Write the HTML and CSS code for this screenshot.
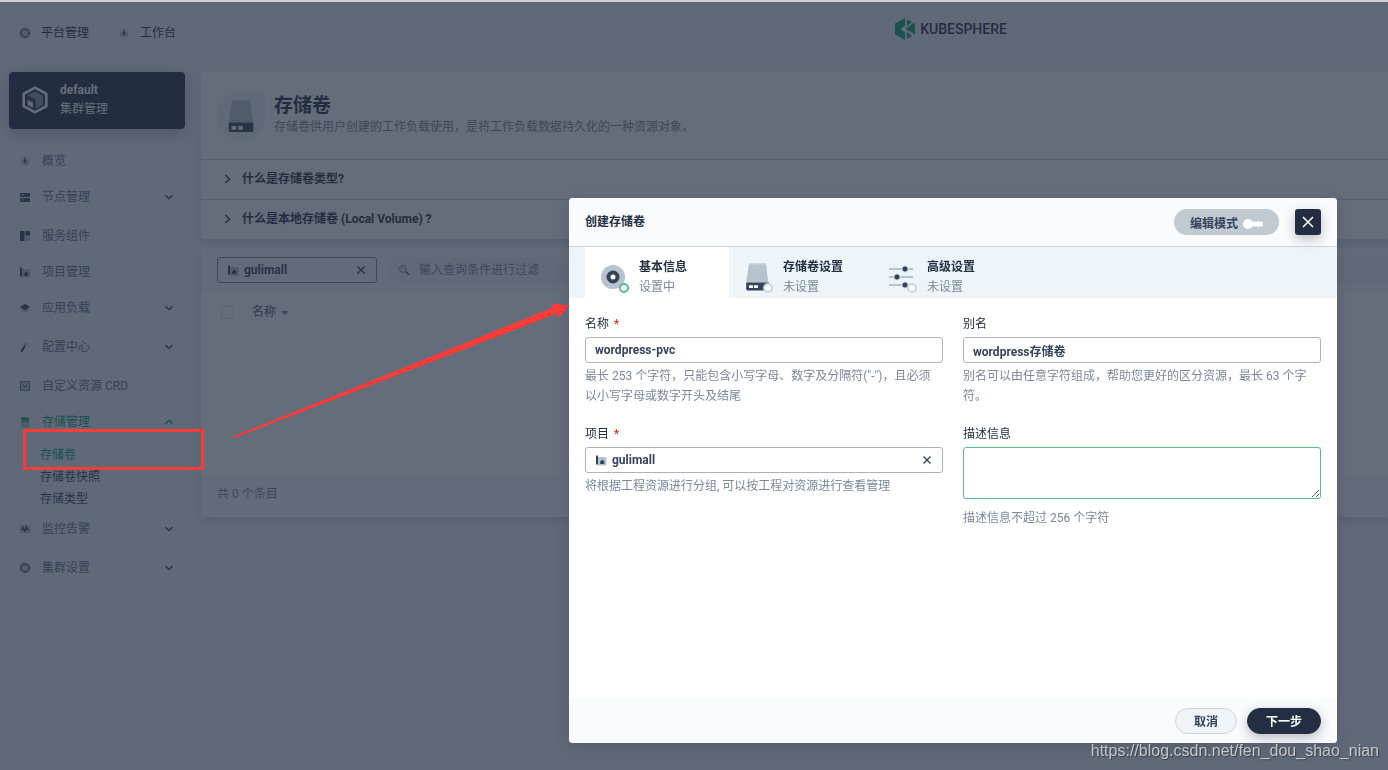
FILE: index.html
```html
<!DOCTYPE html>
<html lang="zh-CN">
<head>
<meta charset="utf-8">
<title>KubeSphere - 存储卷</title>
<link rel="stylesheet" href="styles.css">
</head>
<body>
<svg class="defs" aria-hidden="true">
  <symbol id="i-gear" viewBox="0 0 12 12"><circle cx="6" cy="6" r="4.7" fill="none" stroke="#324558" stroke-width="1.2" stroke-dasharray="1.4 1.06"/><circle cx="6" cy="6" r="3.5" fill="#dce3ea" stroke="#324558"/><circle cx="6" cy="6" r="1.6" fill="#b6c2cd"/></symbol>
  <symbol id="i-gauge" viewBox="0 0 12 12"><circle cx="6" cy="6" r="4.6" fill="#b6c2cd"/><path d="M2 5a4 4 0 0 1 8 0z" fill="#dce3ea"/><path d="M6 2.5v4" stroke="#324558" stroke-width="1.2"/><circle cx="6" cy="6.6" r="1.3" fill="#324558"/></symbol>
  <symbol id="i-node" viewBox="0 0 12 12"><rect x="1" y="2" width="10" height="4" rx=".8" fill="#324558"/><rect x="1" y="7" width="10" height="4" rx=".8" fill="#324558"/><path d="M2 4h3M2 9h3" stroke="#b6c2cd" stroke-width="1.2"/></symbol>
  <symbol id="i-comp" viewBox="0 0 12 12"><rect x="1" y="1" width="4.5" height="10" fill="#324558"/><rect x="6.3" y="1" width="4.7" height="4.5" fill="#324558"/><rect x="6.3" y="6.5" width="4.7" height="4.5" fill="#b6c2cd"/></symbol>
  <symbol id="i-project" viewBox="0 0 12 12"><rect x="3" y="3" width="8.5" height="8.5" fill="#b6c2cd"/><rect x="1" y="1.500" width="2" height="9" fill="#324558"/><path d="M5.200 10V7.500L7.200 5.500l2 2V10z" fill="#324558"/></symbol>
  <symbol id="i-app" viewBox="0 0 12 12"><path d="M1.5 8 6 5.6 10.5 8 6 11z" fill="#b6c2cd"/><path d="M.8 5 6 2l5.2 3L6 8.2z" fill="#324558"/></symbol>
  <symbol id="i-hammer" viewBox="0 0 12 12"><path d="M3 2.8Q7 0 11.2 4.2L9.5 4 7 4.5Z" fill="#b6c2cd"/><path d="M6.2 4.2 2.2 11" stroke="#324558" stroke-width="1.8"/></symbol>
  <symbol id="i-crd" viewBox="0 0 12 12"><rect x="1.5" y="1.5" width="9" height="9" fill="#b6c2cd" stroke="#6b7b8c"/><path d="m4 5.3 2 1.8 2-1.8" fill="none" stroke="#324558"/></symbol>
  <symbol id="i-store" viewBox="0 0 12 12"><rect x="2" y="6" width="8" height="5.5" rx="2" fill="#8ccdb0"/><rect x="2" y="3" width="8" height="4" fill="#55bc8a"/><ellipse cx="6" cy="2.5" rx="4" ry="1.6" fill="#00a971"/><path d="M2 7h8M2 9h8" stroke="#d5eee3" stroke-width=".5"/></symbol>
  <symbol id="i-monitor" viewBox="0 0 12 12"><rect x=".8" y="2.2" width="10.8" height="8" fill="#b6c2cd"/><path d="M1.5 6.5h2l1-2 1.4 4 1.5-4.5 1 2.5h2" fill="none" stroke="#324558" stroke-width="1.2"/></symbol>
  <symbol id="i-down" viewBox="0 0 12 12"><path d="m2.5 4.2 3.5 3.4 3.5-3.4" fill="none" stroke="currentColor" stroke-width="1.4"/></symbol>
  <symbol id="i-up" viewBox="0 0 12 12"><path d="m2.5 7.8 3.5-3.4 3.5 3.4" fill="none" stroke="currentColor" stroke-width="1.4"/></symbol>
  <symbol id="i-right" viewBox="0 0 12 12"><path d="m4.500 2 4 4-4 4" fill="none" stroke="currentColor" stroke-width="1.4"/></symbol>
  <symbol id="i-close" viewBox="0 0 12 12"><path d="m2.5 2.5 7 7m0-7-7 7" fill="none" stroke="currentColor" stroke-width="1.4"/></symbol>
  <symbol id="i-disk" viewBox="0 0 28 36"><path d="M4.500 1.500h19l3.500 23.500H1z" fill="#b6c2cd"/><path d="M4.500 1.500h19l.2 1.500H4.300z" fill="#c8d1d9"/><path d="M1 25h26v8a2 2 0 0 1-2 2H3a2 2 0 0 1-2-2z" fill="#324558"/><path d="M4 28.500h5v4H4zm7 0h5v4h-5z" fill="#fff"/></symbol>
</svg>

<div class="page">
  <header class="topbar">
    <nav class="topnav">
      <a href="#"><svg class="icon"><use href="#i-gear"/></svg>平台管理</a>
      <a href="#"><svg class="icon"><use href="#i-gauge"/></svg>工作台</a>
    </nav>
    <a class="brand" href="#">
      <svg class="brand-mark" viewBox="0 0 20 22"><path d="M10 0v7.500L5.500 11l4.500 3.500V22L0 16.500v-11z" fill="#00a971"/><path d="M12 1.200 17 4l-5 4zM18.500 5 20 5.800v10.400L10.500 11zM12 14l5 4-5 2.900z" fill="#00a971"/></svg>
      <span>KUBESPHERE</span>
    </a>
  </header>

  <div class="layout">
    <aside class="sidebar">
      <a class="cluster" href="#">
        <svg class="cluster-icon" viewBox="0 0 24 26"><path d="M12 1.500 22.500 7.300v11.400L12 24.500 1.500 18.700V7.300z" fill="none" stroke="#fff" stroke-width="2.400"/><path d="M12 4.800 19.500 9v8.500L12 21.500 4.500 17.500V9z" fill="#8a97a8"/><path d="M4.500 9v8.500l7.500 4V13z" fill="#39465a"/><path d="M4.500 9 12 13v8.500" fill="none" stroke="#242e42"/><path d="M5.200 13 10 15.500v4.500L5.200 17.500z" fill="#fff"/></svg>
        <span><strong>default</strong><span>集群管理</span></span>
      </a>
      <ul class="menu">
        <li><a href="#"><svg class="icon"><use href="#i-gauge"/></svg>概览</a></li>
        <li class="parent"><a href="#"><svg class="icon"><use href="#i-node"/></svg>节点管理<svg class="icon caret"><use href="#i-down"/></svg></a></li>
        <li><a href="#"><svg class="icon"><use href="#i-comp"/></svg>服务组件</a></li>
        <li><a href="#"><svg class="icon"><use href="#i-project"/></svg>项目管理</a></li>
        <li class="parent"><a href="#"><svg class="icon"><use href="#i-app"/></svg>应用负载<svg class="icon caret"><use href="#i-down"/></svg></a></li>
        <li class="parent"><a href="#"><svg class="icon"><use href="#i-hammer"/></svg>配置中心<svg class="icon caret"><use href="#i-down"/></svg></a></li>
        <li><a href="#"><svg class="icon"><use href="#i-crd"/></svg>自定义资源 CRD</a></li>
        <li><a class="active" href="#"><svg class="icon"><use href="#i-store"/></svg>存储管理<svg class="icon caret"><use href="#i-up"/></svg></a>
          <ul class="submenu">
            <li><a class="active" href="#">存储卷</a></li>
            <li><a href="#">存储卷快照</a></li>
            <li><a href="#">存储类型</a></li>
          </ul>
        </li>
        <li class="parent"><a href="#"><svg class="icon"><use href="#i-monitor"/></svg>监控告警<svg class="icon caret"><use href="#i-down"/></svg></a></li>
        <li class="parent"><a href="#"><svg class="icon"><use href="#i-gear"/></svg>集群设置<svg class="icon caret"><use href="#i-down"/></svg></a></li>
      </ul>
    </aside>

    <main class="content">
      <section class="card">
        <div class="intro">
          <div class="intro-icon"><svg><use href="#i-disk"/></svg></div>
          <div><h1>存储卷</h1><p>存储卷供用户创建的工作负载使用，是将工作负载数据持久化的一种资源对象。</p></div>
        </div>
        <button class="faq" type="button"><svg class="icon"><use href="#i-right"/></svg>什么是存储卷类型?</button>
        <button class="faq" type="button"><svg class="icon"><use href="#i-right"/></svg>什么是本地存储卷 (Local Volume) ?</button>
      </section>

      <section class="card">
        <div class="toolbar">
          <button class="chip" type="button"><svg class="icon"><use href="#i-project"/></svg><span>gulimall</span><svg class="icon"><use href="#i-close"/></svg></button>
          <label class="search">
            <svg class="icon" viewBox="0 0 12 12"><circle cx="5" cy="5" r="3.500" fill="#dce3ea" stroke="#8c9aaa"/><path d="m7.600 7.600 3.200 3.200" stroke="#324558" stroke-width="1.300"/></svg>
            <input type="search" placeholder="输入查询条件进行过滤" aria-label="过滤">
          </label>
        </div>
        <table class="volumes">
          <thead><tr><th class="pick"><input type="checkbox" aria-label="全选"></th><th>名称 <svg class="sort" viewBox="0 0 8 4"><path d="M0 0h8L4 4z" fill="#79879c"/></svg></th></tr></thead>
          <tbody><tr><td colspan="2"></td></tr></tbody>
        </table>
        <div class="total">共 0 个条目</div>
      </section>
    </main>
  </div>
</div>

<div class="overlay">
  <form class="modal" role="dialog" aria-labelledby="dlg-title">
    <header class="modal-head">
      <h2 id="dlg-title">创建存储卷</h2>
      <button class="mode" type="button">编辑模式<svg viewBox="0 0 20 10"><rect x="4" y="2.500" width="16" height="5" rx="1.500" fill="#fff"/><circle cx="5" cy="5" r="5" fill="#fff"/></svg></button>
      <button class="close" type="button" aria-label="关闭"><svg viewBox="0 0 12 12"><path d="m1 1 10 10m0-10L1 11" stroke="#fff" stroke-width="1.500"/></svg></button>
    </header>
    <div class="tabs">
      <button class="tab current" type="button">
        <span class="tab-icon"><svg viewBox="0 0 24 32"><circle cx="12" cy="16" r="12" fill="#b6c2cd"/><circle cx="12" cy="16" r="4.500" fill="#fff" stroke="#324558" stroke-width="4"/></svg><i class="dot"></i></span>
        <span class="tab-text"><strong>基本信息</strong><span>设置中</span></span>
      </button>
      <button class="tab" type="button">
        <span class="tab-icon"><svg viewBox="0 0 24 32"><path d="M4 2.500h17l2.300 19H1.200z" fill="#b6c2cd"/><path d="M4 2.500h17v1H3.900z" fill="#d0d7de"/><path d="M1.200 21.500H24V28a1.500 1.500 0 0 1-1.500 1.500H2.700A1.500 1.500 0 0 1 1.200 28z" fill="#324558"/><path d="M4 24.300h4v2.800H4zm5 0h4v2.800H9z" fill="#fff"/></svg><i class="dot"></i></span>
        <span class="tab-text"><strong>存储卷设置</strong><span>未设置</span></span>
      </button>
      <button class="tab" type="button">
        <span class="tab-icon"><svg viewBox="0 0 24 32"><path d="M0 8h24M0 16h24M0 24h24" stroke="#b6c2cd" stroke-width="2"/><g fill="#324558" stroke="#eff4f9"><circle cx="16" cy="8" r="3.200"/><circle cx="8" cy="16" r="3.200"/><circle cx="16" cy="24" r="3.200"/></g></svg><i class="dot"></i></span>
        <span class="tab-text"><strong>高级设置</strong><span>未设置</span></span>
      </button>
    </div>
    <div class="fields">
      <div class="field">
        <label for="name">名称 <em>*</em></label>
        <input id="name" type="text" value="wordpress-pvc">
        <p>最长 253 个字符，只能包含小写字母、数字及分隔符("-")，且必须以小写字母或数字开头及结尾</p>
      </div>
      <div class="field">
        <label for="alias">别名</label>
        <input id="alias" type="text" value="wordpress存储卷">
        <p>别名可以由任意字符组成，帮助您更好的区分资源，最长 63 个字符。</p>
      </div>
      <div class="field">
        <label for="project">项目 <em>*</em></label>
        <button id="project" class="picker" type="button"><svg class="icon"><use href="#i-project"/></svg><span>gulimall</span><svg class="icon"><use href="#i-close"/></svg></button>
        <p>将根据工程资源进行分组, 可以按工程对资源进行查看管理</p>
      </div>
      <div class="field">
        <label for="desc">描述信息</label>
        <textarea id="desc"></textarea>
        <p class="spaced">描述信息不超过 256 个字符</p>
      </div>
    </div>
    <footer class="modal-foot">
      <button class="btn" type="button">取消</button>
      <button class="btn primary" type="button">下一步</button>
    </footer>
  </form>
</div>

<svg class="marks" aria-hidden="true"><rect x="24.500" y="430.500" width="178" height="38" fill="none" stroke="#fc3a38" stroke-width="3"/><path d="M233 436.500 553 307.500 551 303.500 569 305.500 558.500 317.500 556.500 313.500 234 438z" fill="#fc3a38"/></svg>
<div class="watermark">https://blog.csdn.net/fen_dou_shao_nian</div>
</body>
</html>
```
FILE: styles.css
```css
* { box-sizing: border-box; }

body {
  margin: 0;
  background: #eff4f9;
  color: #242e42;
  font: 12px/20px Roboto, "Noto Sans CJK SC", sans-serif;
}

h1, h2, p, ul { margin: 0; padding: 0; }
ul { list-style: none; }
a { color: inherit; text-decoration: none; }
button, input, textarea { font: inherit; color: inherit; }
button { margin: 0; padding: 0; border: 0; background: none; cursor: pointer; }
.defs { position: absolute; width: 0; height: 0; }
.icon { width: 12px; height: 12px; flex: none; }

.page { min-height: 100vh; overflow: hidden; }

/* Top bar */
.topbar {
  display: grid;
  grid-template-columns: 64% auto;
  justify-content: start;
  align-items: start;
  height: 72px;
  padding: 18px 0 0 19px;
}
.topnav { display: flex; gap: 29px; padding-top: 5px; }
.topnav a { display: flex; align-items: center; gap: 10px; }
.brand {
  display: flex;
  align-items: center;
  gap: 5px;
  font-size: 14px;
  font-weight: 500;
  line-height: 22px;
}
.brand-mark { width: 20px; height: 22px; }

/* Side navigation */
.layout { display: flex; align-items: flex-start; gap: 16px; padding-left: 9px; }
.sidebar { flex: none; width: 176px; }
.cluster {
  display: flex;
  align-items: center;
  gap: 12px;
  height: 57px;
  margin-bottom: 14px;
  padding: 0 13px 2px;
  border-radius: 4px;
  background: #242e42;
  box-shadow: 0 4px 16px rgba(36, 46, 66, .3);
  color: #fff;
  line-height: 19px;
}
.cluster-icon { width: 26px; height: 28px; }
.cluster strong, .cluster span span { display: block; }
.menu { color: #5f708a; }
.menu > li > a {
  display: flex;
  align-items: center;
  gap: 11px;
  height: 36px;
  padding: 0 10px;
}
.menu .parent { padding-bottom: 3px; }
.caret { margin-left: auto; color: #324558; }
.submenu { padding: 4px 0 1px 31px; color: #36435c; line-height: 22px; }
.menu .active, .menu .active .caret { color: #00a971; }

/* Content */
.content { flex: 1; display: grid; gap: 10px; min-width: 0; }
.card {
  overflow: hidden;
  border-radius: 4px 0 0 4px;
  background: #fff;
  box-shadow: 0 4px 8px rgba(36, 46, 66, .15);
}
.intro { display: flex; align-items: center; gap: 9px; height: 87px; padding: 0 16px; }
.intro-icon {
  display: grid;
  place-items: center;
  width: 48px;
  height: 48px;
  border-radius: 24px 4px 24px 24px;
  background: #eff4f9;
}
.intro-icon svg { width: 28px; height: 34px; }
.intro h1 { font-size: 19px; line-height: 24px; }
.intro p { padding-bottom: 1px; color: #79879c; line-height: 18px; }
.faq {
  display: flex;
  align-items: center;
  gap: 9px;
  width: 100%;
  height: 40px;
  padding: 0 20px 2px;
  border-top: 1px solid #ccd3db;
  font-weight: 700;
}
.toolbar {
  display: flex;
  align-items: center;
  gap: 10px;
  height: 42px;
  padding: 0 0 0 16px;
  border-bottom: 1px solid #eff4f9;
  background: #f9fbfd;
}
.chip, .picker {
  display: flex;
  align-items: center;
  gap: 5px;
  height: 26px;
  padding: 0 9px;
  border: 1px solid #abb4be;
  border-radius: 3px;
  color: #36435c;
  font-weight: 700;
  text-align: left;
}
.chip { width: 160px; border-color: #79879c; }
.chip span, .picker span { flex: 1; }
.search {
  flex: 1;
  display: flex;
  align-items: center;
  gap: 9px;
  height: 26px;
  padding: 0 11px;
  border-radius: 13px 0 0 13px;
  background: #eff4f9;
}
.search input { flex: 1; padding: 0; border: 0; background: none; outline: 0; }
.search input::placeholder { color: #79879c; }
.volumes { width: 100%; border-collapse: collapse; color: #5f708a; text-align: left; }
.volumes th { height: 42px; padding: 0; font-weight: 500; }
.volumes .pick { width: 51px; padding-left: 20px; }
.volumes .pick input {
  display: block;
  width: 13px;
  height: 13px;
  margin: 0;
  appearance: none;
  border: 1px solid #dce3ea;
  border-radius: 2px;
}
.volumes td { height: 143px; padding: 0; }
.sort { width: 8px; height: 4px; margin-left: 2px; vertical-align: middle; }
.total { padding: 8px 16px 13px; background: #f9fbfd; color: #79879c; }

/* Dialog */
.overlay {
  position: fixed;
  inset: 0;
  display: flex;
  justify-content: flex-end;
  align-items: flex-end;
  padding: 27px 51px;
  border-top: 2px solid #cdd1d6;
  background: rgba(36, 46, 66, .7);
  background-clip: padding-box;
}
.modal {
  width: 768px;
  max-width: 100%;
  overflow: hidden;
  border-radius: 4px;
  background: #fff;
  box-shadow: 0 4px 16px rgba(36, 46, 66, .2);
}
.modal-head {
  display: flex;
  align-items: center;
  gap: 16px;
  height: 49px;
  padding: 0 16px;
  border-bottom: 1px solid #ccd3db;
  background: #f9fbfd;
}
.modal-head h2 { flex: 1; font-size: 12px; line-height: 20px; }
.mode {
  display: flex;
  align-items: center;
  gap: 5px;
  height: 26px;
  padding: 3px 16px 0;
  border-radius: 13px;
  background: #c1c9d1;
  color: #36435c;
  font-weight: 700;
}
.mode svg { width: 20px; height: 10px; }
.close {
  display: grid;
  place-items: center;
  width: 26px;
  height: 26px;
  border-radius: 3px;
  background: #242e42;
  box-shadow: 0 4px 12px rgba(36, 46, 66, .3);
}
.close svg { width: 12px; height: 12px; }
.tabs { display: flex; padding-left: 16px; background: #eff4f9; }
.tab {
  display: flex;
  align-items: center;
  gap: 14px;
  width: 144px;
  height: 51px;
  padding: 8px 16px 0;
  text-align: left;
}
.tab.current { background: #fff; }
.tab-icon { position: relative; width: 24px; height: 32px; }
.tab-icon svg { display: block; width: 24px; height: 32px; }
.dot {
  position: absolute;
  right: -4px;
  bottom: 0;
  width: 10px;
  height: 10px;
  border: 2px solid #ccd3db;
  border-radius: 50%;
  background: #fff;
}
.current .dot { border-color: #55bc8a; }
.tab-text strong, .tab-text span { display: block; }
.tab-text span { color: #79879c; }
.fields {
  display: grid;
  grid-template-columns: 1fr 1fr;
  align-content: start;
  gap: 18px 20px;
  min-height: 400px;
  padding: 16px;
}
.field { display: flex; flex-direction: column; }
.field label { margin-bottom: 3px; }
.field em { margin-left: 2px; color: #ca2621; font-style: normal; }
.field input, .field textarea {
  height: 26px;
  padding: 0 9px;
  border: 1px solid #abb4be;
  border-radius: 3px;
  background: #fff;
  color: #36435c;
  font-weight: 700;
}
.field textarea { height: 52px; border-color: #55bc8a; outline: 0; }
.field p { margin-top: 3px; padding-right: 4px; color: #79879c; }
.field .spaced { margin-top: 9px; }
.modal-foot {
  display: flex;
  justify-content: flex-end;
  align-items: center;
  gap: 10px;
  height: 45px;
  padding: 0 16px;
  background: #f9fbfd;
}
.btn {
  height: 26px;
  padding: 2px 18px 0;
  border: 1px solid #ccd3db;
  border-radius: 13px;
  background: #eff4f9;
  color: #36435c;
  font-weight: 700;
}
.btn.primary {
  border-color: #242e42;
  background: #242e42;
  box-shadow: 0 4px 12px rgba(36, 46, 66, .3);
  color: #fff;
}

/* Annotations */
.marks { position: absolute; top: 0; left: 0; width: 570px; height: 480px; pointer-events: none; }
.watermark {
  position: fixed;
  right: 9px;
  bottom: 9px;
  color: rgba(255, 255, 255, .65);
  font: 16px/20px "Liberation Sans", sans-serif;
  text-shadow: 1px 1px 1px rgba(0, 0, 0, .4);
}
```
